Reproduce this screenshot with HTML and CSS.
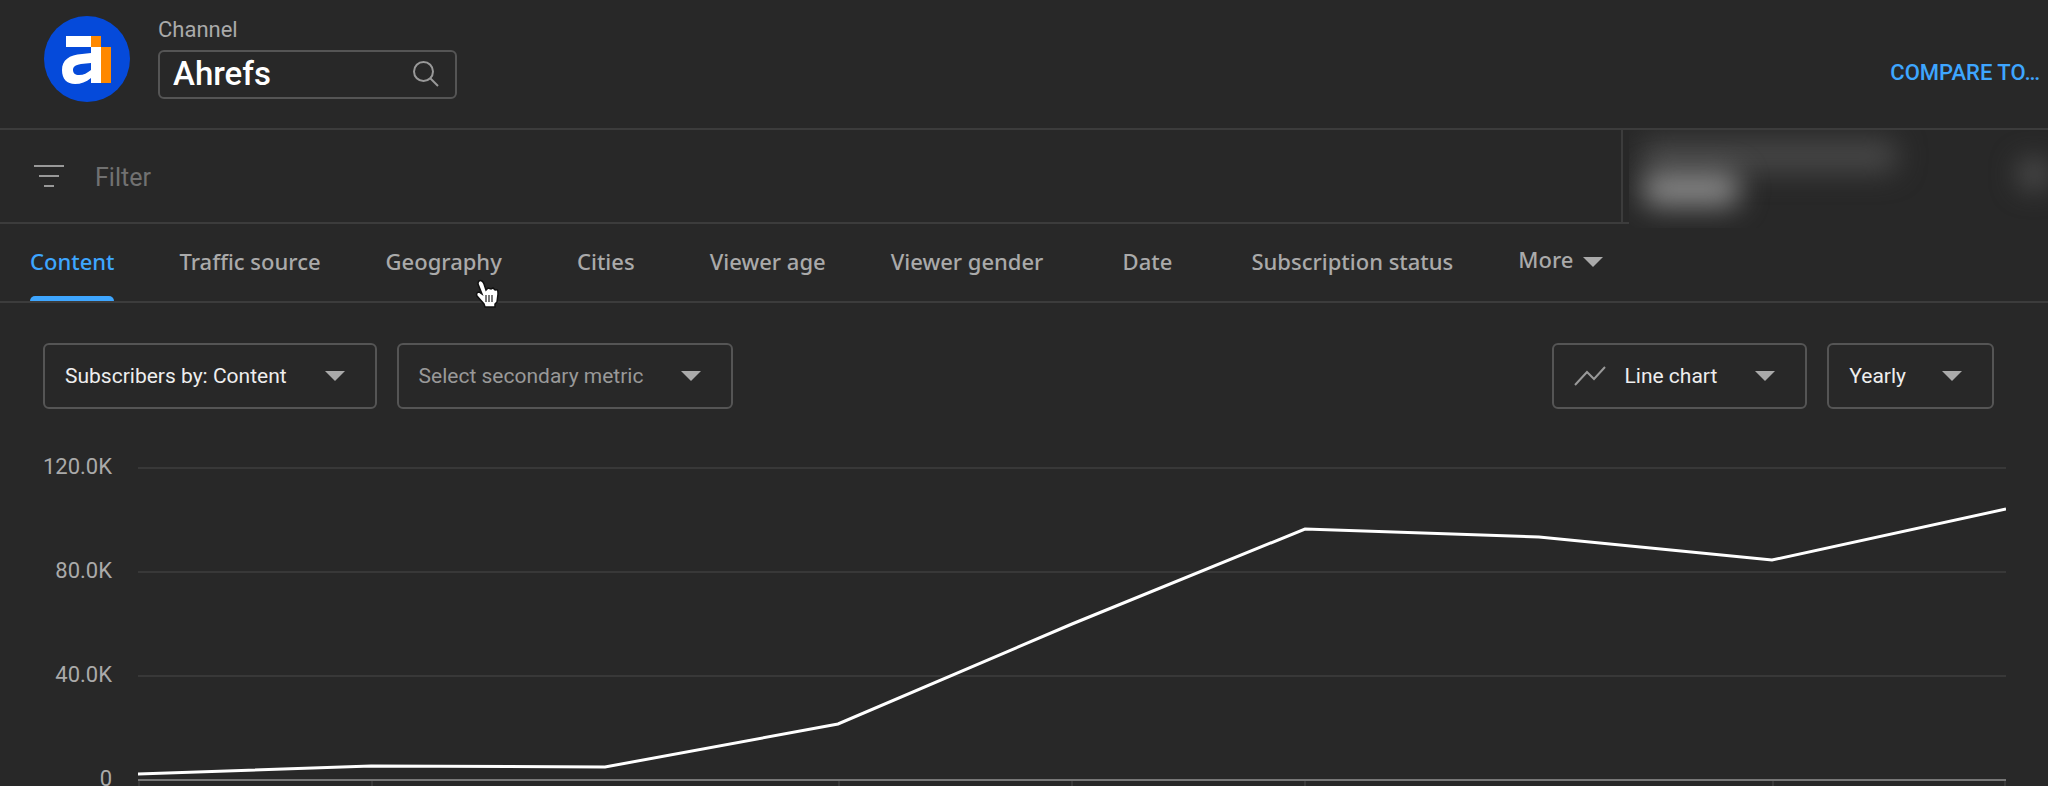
FILE: index.html
```html
<!DOCTYPE html>
<html lang="en">
<head>
  <meta charset="UTF-8">
  <title>Channel analytics</title>
  <link rel="stylesheet" href="styles.css">
</head>
<body>
  <header class="header">
    <svg class="logo" viewBox="0 0 86 86" aria-hidden="true">
      <circle cx="43" cy="43" r="43" fill="#054ada"/>
      <path d="M22 20h25v11H22z" fill="#fff"/>
      <path d="M47 20h10v11H47zM57 31h10v36H57z" fill="#ff8800"/>
      <path d="M47 31h10v36H47v-5c-5 4-10 6-16 6-8 0-13-5-13-14 0-10 7-15 20-16l9-1zM47 47l-10 1c-6 1-8 3-8 6s2 5 6 5c5 0 8-2 12-5z" fill="#fff" fill-rule="evenodd"/>
    </svg>
    <div class="channel">
      <label class="channel-label" for="channel">Channel</label>
      <div class="channel-box">
        <input id="channel" class="channel-input" type="text" value="Ahrefs">
        <svg class="search-icon" viewBox="0 0 26 26" aria-hidden="true">
          <circle cx="10.500" cy="10.500" r="9.500"/>
          <path d="M17 17l8 8"/>
        </svg>
      </div>
    </div>
    <button class="compare" type="button">COMPARE TO…</button>
  </header>

  <div class="filter-bar">
    <div class="filter">
      <svg class="filter-icon" viewBox="0 0 30 24" aria-hidden="true">
        <path d="M0 2h30M5 12h20M10 22h10"/>
      </svg>
      <input class="filter-input" type="text" placeholder="Filter" aria-label="Filter">
    </div>
    <div class="period">
      <div class="blur blur-range"></div>
      <div class="blur blur-name"></div>
      <div class="blur blur-arrow"></div>
    </div>
  </div>

  <nav class="tabs">
    <button class="tab active" type="button">Content</button>
    <button class="tab" type="button">Traffic source</button>
    <button class="tab" type="button">Geography
      <svg class="cursor" viewBox="0 0 26 30" aria-hidden="true">
        <path d="M5 2c2-1 4 0 5 3l2 6 2-2 3 1 2-1 2 2c3-1 3 1 3 4l-1 8-2 2v3H11l-1-3-7-8c-1-2 0-4 2-4l3 2L4 5c0-1 0-2 1-3z" fill="#fff" stroke="#111" stroke-width="1.500"/>
        <path d="M12 16v7M15 16v7M18 16v7" stroke="#222" stroke-width="1.200"/>
      </svg>
    </button>
    <button class="tab" type="button">Cities</button>
    <button class="tab" type="button">Viewer age</button>
    <button class="tab" type="button">Viewer gender</button>
    <button class="tab" type="button">Date</button>
    <button class="tab" type="button">Subscription status</button>
    <button class="tab more" type="button">More <span class="arrow"></span></button>
  </nav>

  <div class="controls">
    <button class="dropdown" type="button">Subscribers by: Content <span class="arrow"></span></button>
    <button class="dropdown secondary" type="button">Select secondary metric <span class="arrow"></span></button>
    <button class="dropdown chart-type" type="button">
      <svg class="line-icon" viewBox="0 0 32 20" aria-hidden="true"><path d="M1 19L13 6l7 7L31 1"/></svg>
      Line chart <span class="arrow"></span>
    </button>
    <button class="dropdown interval" type="button">Yearly <span class="arrow"></span></button>
  </div>

  <main class="chart">
    <div class="y-axis">
      <span>120.0K</span>
      <span>80.0K</span>
      <span>40.0K</span>
      <span>0</span>
    </div>
    <svg class="plot" viewBox="0 0 1868 319" preserveAspectRatio="none" role="img" aria-label="Subscribers per year">
      <path class="grid" d="M0 1h1868M0 105h1868M0 209h1868"/>
      <path class="ticks" d="M1 313v6M234 313v6M701 313v6M934 313v6M1167 313v6M1635 313v6M1867 313v6"/>
      <path class="axis" d="M0 313h1868"/>
      <polyline class="series" points="0,307 233,299 467,300 700,257 934,157 1167,62 1401,70 1634,93 1868,42"/>
    </svg>
  </main>
</body>
</html>
```
FILE: styles.css
```css
* {
  box-sizing: border-box;
}
body {
  margin: 0;
  background: #282828;
  color: #aaa;
  font-family: Roboto, "Liberation Sans", sans-serif;
  font-size: 22px;
}
button, input {
  font: inherit;
  color: inherit;
  background: none;
  border: 0;
  padding: 0;
}
button {
  cursor: pointer;
}

/* channel picker */
.header {
  display: flex;
  align-items: flex-start;
  height: 130px;
  padding: 16px 8px 0 44px;
  border-bottom: 2px solid #3c3c3c;
}
.logo {
  width: 86px;
  height: 86px;
  margin-right: 28px;
}
.channel {
  width: 299px;
}
.channel-label {
  display: block;
  height: 34px;
  line-height: 28px;
}
.channel-box {
  display: flex;
  align-items: center;
  height: 49px;
  padding: 0 16px 2px 13px;
  border: 2px solid #555;
  border-radius: 6px;
}
.channel-input {
  flex: 1;
  min-width: 0;
  height: 42px;
  color: #fff;
  font-size: 33px;
  font-weight: 500;
}
.search-icon {
  width: 26px;
  height: 26px;
  fill: none;
  stroke: #999;
  stroke-width: 2;
}
.compare {
  margin: 43px 0 0 auto;
  line-height: 28px;
  color: #3ea6ff;
  font-weight: 500;
}

/* filter bar */
.filter-bar {
  display: flex;
  height: 92px;
}
.filter {
  display: flex;
  flex: 1;
  align-items: center;
  gap: 31px;
  padding-left: 34px;
  border-right: 2px solid #3c3c3c;
}
.filter-icon {
  width: 30px;
  height: 24px;
  fill: none;
  stroke: #999;
  stroke-width: 2;
}
.filter-input {
  flex: 1;
  height: 32px;
  padding-top: 2px;
  font-size: 25px;
}
.filter-input::placeholder {
  color: #717171;
}
/* blurred period picker, runs over the line below it */
.period {
  position: relative;
  z-index: 1;
  width: 419px;
  margin: 0 0 -6px 6px;
  overflow: hidden;
  background: #282828;
}
.blur {
  position: absolute;
  border-radius: 12px;
  background: #888;
  filter: blur(14px);
}
.blur-range {
  top: 10px;
  left: 12px;
  width: 256px;
  height: 32px;
  background: #484848;
}
.blur-name {
  top: 42px;
  left: 14px;
  width: 96px;
  height: 34px;
}
.blur-arrow {
  top: 30px;
  left: 390px;
  width: 30px;
  height: 28px;
  background: #555;
}

/* tabs */
.tabs {
  display: flex;
  gap: 5px;
  height: 81px;
  border-top: 2px solid #3c3c3c;
  border-bottom: 2px solid #3c3c3c;
}
.tab {
  position: relative;
  min-width: 138px;
  padding: 0 30px 4px;
  font-family: "Noto Sans", sans-serif;
  font-weight: 500;
  white-space: nowrap;
}
.active {
  color: #3ea6ff;
}
.active::after {
  content: "";
  position: absolute;
  left: 30px;
  right: 30px;
  bottom: 0;
  height: 5px;
  border-radius: 5px 5px 0 0;
  background: #3ea6ff;
}
.more {
  padding-bottom: 8px;
}
.more .arrow {
  margin-left: 4px;
}
.cursor {
  position: absolute;
  right: 32px;
  bottom: -8px;
  width: 26px;
  height: 30px;
}
.arrow {
  display: inline-block;
  border: 10px solid transparent;
  border-top-color: #aaa;
  border-bottom: 0;
  vertical-align: middle;
}

/* chart controls */
.controls {
  display: flex;
  gap: 20px;
  padding: 40px 54px 0 43px;
}
.dropdown {
  display: flex;
  align-items: center;
  height: 66px;
  padding: 0 30px 0 20px;
  border: 2px solid #555;
  border-radius: 6px;
  color: #eee;
  font-size: 21px;
}
.dropdown .arrow {
  margin-left: 38px;
}
.secondary {
  color: #999;
}
.chart-type {
  margin-left: auto;
}
.interval .arrow {
  margin-left: 36px;
}
.line-icon {
  width: 32px;
  height: 20px;
  margin-right: 18px;
  fill: none;
  stroke: #999;
  stroke-width: 2;
}

/* chart */
.chart {
  display: flex;
  padding: 58px 42px 0 0;
}
.y-axis {
  display: flex;
  flex-direction: column;
  gap: 92px;
  width: 112px;
  margin: -6px 26px 0 0;
  text-align: right;
  line-height: 12px;
}
.plot {
  flex: 1;
  min-width: 0;
  height: 319px;
}
.plot path, .plot polyline {
  fill: none;
  stroke-width: 2;
}
.plot .grid, .plot .ticks {
  stroke: #383838;
}
.plot .axis {
  stroke: #777;
}
.plot .series {
  stroke: #fff;
  stroke-width: 3;
}
```
